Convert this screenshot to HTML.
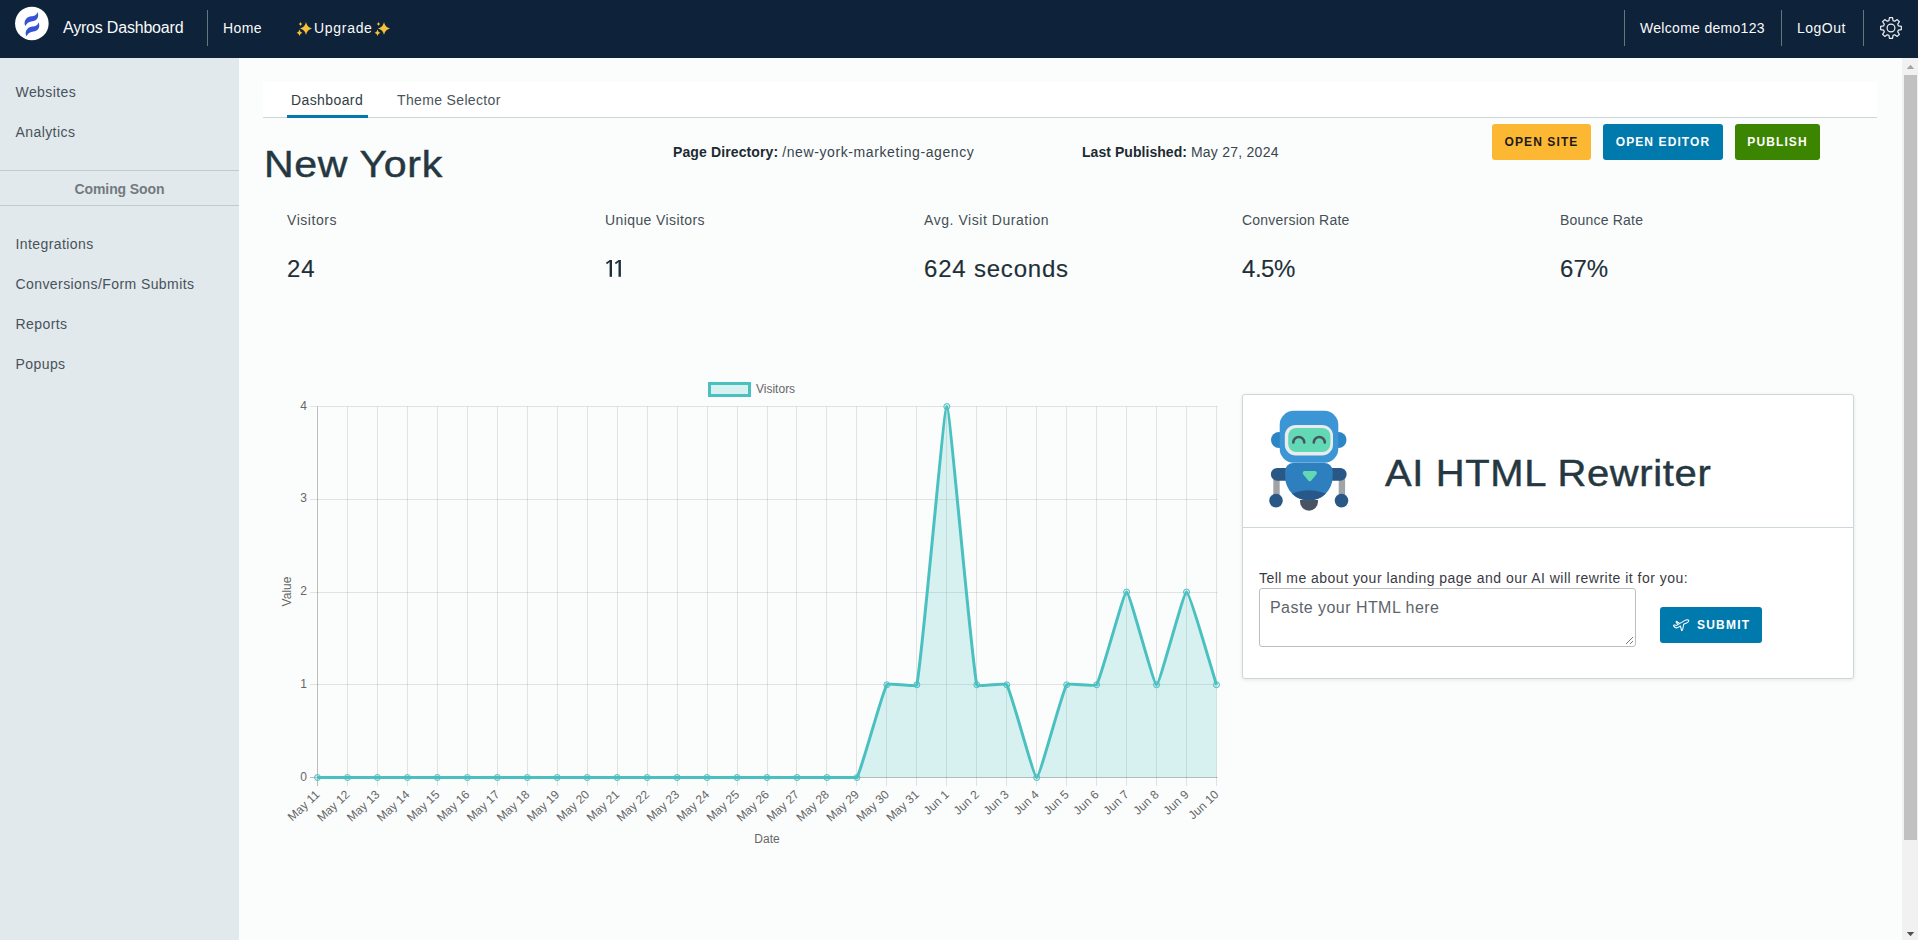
<!DOCTYPE html>
<html><head><meta charset="utf-8">
<style>
*{margin:0;padding:0;box-sizing:border-box}
html,body{width:1918px;height:940px;overflow:hidden;background:#fbfdfd;font-family:"Liberation Sans",sans-serif}
.abs{position:absolute;white-space:nowrap}
#hdr{position:absolute;left:0;top:0;width:1918px;height:58px;background:#0e2239}
.hdiv{position:absolute;top:10px;width:1px;height:36px;background:#66767a}
.htxt{position:absolute;color:#fafafa;white-space:nowrap}
#side{position:absolute;left:0;top:58px;width:239px;height:882px;background:#e1e9ec}
.nav{position:absolute;left:15.5px;font-size:14px;color:#48525a;letter-spacing:0.42px;white-space:nowrap}
#main{position:absolute;left:239px;top:58px;width:1664px;height:882px;background:#fbfdfd}
#sb{position:absolute;left:1902px;top:58px;width:16px;height:882px;background:#f1f1f1}
.t{position:absolute;white-space:nowrap}
.lbl{font-size:14px;color:#454f55;letter-spacing:0.55px}
.val{font-size:24px;color:#1f2f38;letter-spacing:0.8px;-webkit-text-stroke:0.15px #1f2f38}
.btn{position:absolute;top:124px;height:36px;border-radius:3px;font-size:12px;font-weight:bold;letter-spacing:1.1px;text-align:center;line-height:36px;color:#fff}
.ct{font-family:"Liberation Sans",sans-serif;font-size:12px;fill:#666}
</style></head><body>
<div id="hdr">
  <svg class="abs" style="left:14px;top:6px" width="36" height="36" viewBox="0 0 36 36">
    <circle cx="17.85" cy="17.45" r="16.8" fill="#fff"/>
    <path id="sw" d="M23.4 5.9 C25.3 9.8 23.8 13.8 19.6 14.9 C16.4 15.6 13.3 15.8 11.4 20.0 C9.2 16.2 11.6 11.2 17.0 10.3 C20.4 9.8 22.7 9.2 23.4 5.9Z" fill="#3553d4"/>
    <path d="M23.4 5.9 C25.3 9.8 23.8 13.8 19.6 14.9 C16.4 15.6 13.3 15.8 11.4 20.0 C9.2 16.2 11.6 11.2 17.0 10.3 C20.4 9.8 22.7 9.2 23.4 5.9Z" fill="#3553d4" transform="translate(1.1,10.3)"/>
  </svg>
  <div class="htxt" style="left:63px;top:18.5px;font-size:16px;letter-spacing:-0.2px">Ayros Dashboard</div>
  <div class="hdiv" style="left:207px"></div>
  <div class="htxt" style="left:223px;top:20px;font-size:14px;letter-spacing:0.4px">Home</div>
  <svg class="abs" style="left:296.1px;top:21.1px" width="17" height="16" viewBox="0 0 17 16">
    <path d="M10 1 Q10.8 6.2 16 7.5 Q10.8 8.8 10 14 Q9.2 8.8 4 7.5 Q9.2 6.2 10 1Z" fill="#f8c13a"/>
    <path d="M3.5 8.5 Q3.9 11 6.4 11.7 Q3.9 12.4 3.5 15 Q3.1 12.4 0.6 11.7 Q3.1 11 3.5 8.5Z" fill="#f8c13a"/>
    <path d="M4.5 1 Q4.8 2.6 6.3 3 Q4.8 3.4 4.5 5 Q4.2 3.4 2.7 3 Q4.2 2.6 4.5 1Z" fill="#f8c13a"/>
  </svg>
  <div class="htxt" style="left:314px;top:20px;font-size:14px;letter-spacing:0.7px">Upgrade</div>
  <svg class="abs" style="left:373.5px;top:21.1px" width="17" height="16" viewBox="0 0 17 16">
    <path d="M10 1 Q10.8 6.2 16 7.5 Q10.8 8.8 10 14 Q9.2 8.8 4 7.5 Q9.2 6.2 10 1Z" fill="#f8c13a"/>
    <path d="M3.5 8.5 Q3.9 11 6.4 11.7 Q3.9 12.4 3.5 15 Q3.1 12.4 0.6 11.7 Q3.1 11 3.5 8.5Z" fill="#f8c13a"/>
    <path d="M4.5 1 Q4.8 2.6 6.3 3 Q4.8 3.4 4.5 5 Q4.2 3.4 2.7 3 Q4.2 2.6 4.5 1Z" fill="#f8c13a"/>
  </svg>
  <div class="hdiv" style="left:1624px"></div>
  <div class="htxt" style="left:1640px;top:20px;font-size:14px;letter-spacing:0.3px">Welcome demo123</div>
  <div class="hdiv" style="left:1781px"></div>
  <div class="htxt" style="left:1797px;top:20px;font-size:14px;letter-spacing:0.5px">LogOut</div>
  <div class="hdiv" style="left:1863px"></div>
  <svg class="abs" style="left:1879px;top:16px" width="24" height="24" viewBox="0 0 24 24">
    <g fill="none" stroke="#eef0f2" stroke-width="1.2" stroke-linejoin="round">
      <circle cx="12" cy="12" r="3.9"/>
      <path d="M9.94 4.58 L10.46 1.66 L13.54 1.66 L14.06 4.58 L15.79 5.30 L18.22 3.60 L20.40 5.78 L18.70 8.21 L19.42 9.94 L22.34 10.46 L22.34 13.54 L19.42 14.06 L18.70 15.79 L20.40 18.22 L18.22 20.40 L15.79 18.70 L14.06 19.42 L13.54 22.34 L10.46 22.34 L9.94 19.42 L8.21 18.70 L5.78 20.40 L3.60 18.22 L5.30 15.79 L4.58 14.06 L1.66 13.54 L1.66 10.46 L4.58 9.94 L5.30 8.21 L3.60 5.78 L5.78 3.60 L8.21 5.30Z"/>
    </g>
  </svg>
</div>
<div id="side">
  <div class="nav" style="top:26px">Websites</div>
  <div class="nav" style="top:66px">Analytics</div>
  <div style="position:absolute;left:0;top:112px;width:239px;height:1px;background:#c3c9cc"></div>
  <div class="t" style="left:0;width:239px;top:123px;text-align:center;font-size:14px;font-weight:bold;color:#737a7e;letter-spacing:-0.1px">Coming Soon</div>
  <div style="position:absolute;left:0;top:147px;width:239px;height:1px;background:#c3c9cc"></div>
  <div class="nav" style="top:178px">Integrations</div>
  <div class="nav" style="top:218px">Conversions/Form Submits</div>
  <div class="nav" style="top:258px">Reports</div>
  <div class="nav" style="top:298px">Popups</div>
</div>
<div id="main"></div>
<!-- tabs -->
<div style="position:absolute;left:263px;top:82px;width:1614px;height:36px;background:#fff;border-bottom:1px solid #ccd5da"></div>
<div style="position:absolute;left:287px;top:115px;width:81px;height:3px;background:#0079ad"></div>
<div class="t" style="left:291px;top:92px;font-size:14px;color:#313d44;letter-spacing:0.4px">Dashboard</div>
<div class="t" style="left:397px;top:92px;font-size:14px;color:#49545a;letter-spacing:0.35px">Theme Selector</div>
<!-- title row -->
<div class="t" style="left:264px;top:144px;font-size:37px;color:#253841;letter-spacing:0.6px;transform:scaleX(1.11);transform-origin:0 0;-webkit-text-stroke:0.45px #253841">New York</div>
<div class="t" style="left:673px;top:144px;font-size:14px;color:#1e2a31"><b style="letter-spacing:0.12px">Page Directory:</b> <span style="letter-spacing:0.6px;color:#39444b">/new-york-marketing-agency</span></div>
<div class="t" style="left:1082px;top:144px;font-size:14px;color:#1e2a31"><b style="letter-spacing:0.05px">Last Published:</b> <span style="letter-spacing:0.25px;color:#39444b">May 27, 2024</span></div>
<div class="btn" style="left:1492px;width:99px;background:#fdb833;color:#1b1b1b">OPEN SITE</div>
<div class="btn" style="left:1603px;width:120px;background:#0079ad">OPEN EDITOR</div>
<div class="btn" style="left:1735px;width:85px;background:#3c8500">PUBLISH</div>
<!-- stats -->
<div class="t lbl" style="left:287px;top:212px">Visitors</div>
<div class="t val" style="left:287px;top:255px">24</div>
<div class="t lbl" style="left:605px;top:212px;letter-spacing:0.4px">Unique Visitors</div>
<svg class="abs" style="left:600px;top:255px" width="30" height="27" viewBox="600 255 30 27"><g fill="#1f2f38">
<rect x="609.6" y="260" width="2.4" height="16.8"/><path d="M609.8 259.9 L612 260.2 L607 264.2 L605.9 262.8Z"/>
<rect x="618.5" y="260" width="2.4" height="16.8"/><path d="M618.7 259.9 L620.9 260.2 L615.9 264.2 L614.8 262.8Z"/>
</g></svg>
<div class="t lbl" style="left:924px;top:212px">Avg. Visit Duration</div>
<div class="t val" style="left:924px;top:255px">624 seconds</div>
<div class="t lbl" style="left:1242px;top:212px;letter-spacing:0.22px">Conversion Rate</div>
<div class="t val" style="left:1242px;top:255px;letter-spacing:-0.47px">4.5%</div>
<div class="t lbl" style="left:1560px;top:212px;letter-spacing:0.2px">Bounce Rate</div>
<div class="t val" style="left:1560px;top:255px;letter-spacing:0.05px">67%</div>
<!-- chart -->
<svg style="position:absolute;left:0;top:0" width="1918" height="940" viewBox="0 0 1918 940">
<rect x="709.5" y="383.5" width="40" height="12" fill="rgba(75,192,192,0.2)" stroke="rgb(75,192,192)" stroke-width="3"/>
<text x="756" y="393" class="ct">Visitors</text>
<text transform="translate(290.5,591.5) rotate(-90)" text-anchor="middle" class="ct">Value</text>
<text x="767" y="843" text-anchor="middle" class="ct">Date</text>
<line x1="310" y1="777.5" x2="1217.5" y2="777.5" stroke="rgba(0,0,0,0.25)" stroke-width="1"/>
<line x1="310" y1="684.5" x2="1217.5" y2="684.5" stroke="rgba(0,0,0,0.1)" stroke-width="1"/>
<line x1="310" y1="592.5" x2="1217.5" y2="592.5" stroke="rgba(0,0,0,0.1)" stroke-width="1"/>
<line x1="310" y1="499.5" x2="1217.5" y2="499.5" stroke="rgba(0,0,0,0.1)" stroke-width="1"/>
<line x1="310" y1="406.5" x2="1217.5" y2="406.5" stroke="rgba(0,0,0,0.1)" stroke-width="1"/>
<line x1="317.5" y1="406.5" x2="317.5" y2="786" stroke="rgba(0,0,0,0.25)" stroke-width="1"/>
<line x1="347.5" y1="406.5" x2="347.5" y2="786" stroke="rgba(0,0,0,0.1)" stroke-width="1"/>
<line x1="377.5" y1="406.5" x2="377.5" y2="786" stroke="rgba(0,0,0,0.1)" stroke-width="1"/>
<line x1="407.5" y1="406.5" x2="407.5" y2="786" stroke="rgba(0,0,0,0.1)" stroke-width="1"/>
<line x1="437.5" y1="406.5" x2="437.5" y2="786" stroke="rgba(0,0,0,0.1)" stroke-width="1"/>
<line x1="467.5" y1="406.5" x2="467.5" y2="786" stroke="rgba(0,0,0,0.1)" stroke-width="1"/>
<line x1="497.5" y1="406.5" x2="497.5" y2="786" stroke="rgba(0,0,0,0.1)" stroke-width="1"/>
<line x1="527.5" y1="406.5" x2="527.5" y2="786" stroke="rgba(0,0,0,0.1)" stroke-width="1"/>
<line x1="557.5" y1="406.5" x2="557.5" y2="786" stroke="rgba(0,0,0,0.1)" stroke-width="1"/>
<line x1="587.5" y1="406.5" x2="587.5" y2="786" stroke="rgba(0,0,0,0.1)" stroke-width="1"/>
<line x1="617.5" y1="406.5" x2="617.5" y2="786" stroke="rgba(0,0,0,0.1)" stroke-width="1"/>
<line x1="647.5" y1="406.5" x2="647.5" y2="786" stroke="rgba(0,0,0,0.1)" stroke-width="1"/>
<line x1="677.5" y1="406.5" x2="677.5" y2="786" stroke="rgba(0,0,0,0.1)" stroke-width="1"/>
<line x1="707.5" y1="406.5" x2="707.5" y2="786" stroke="rgba(0,0,0,0.1)" stroke-width="1"/>
<line x1="737.5" y1="406.5" x2="737.5" y2="786" stroke="rgba(0,0,0,0.1)" stroke-width="1"/>
<line x1="767.5" y1="406.5" x2="767.5" y2="786" stroke="rgba(0,0,0,0.1)" stroke-width="1"/>
<line x1="796.5" y1="406.5" x2="796.5" y2="786" stroke="rgba(0,0,0,0.1)" stroke-width="1"/>
<line x1="826.5" y1="406.5" x2="826.5" y2="786" stroke="rgba(0,0,0,0.1)" stroke-width="1"/>
<line x1="856.5" y1="406.5" x2="856.5" y2="786" stroke="rgba(0,0,0,0.1)" stroke-width="1"/>
<line x1="886.5" y1="406.5" x2="886.5" y2="786" stroke="rgba(0,0,0,0.1)" stroke-width="1"/>
<line x1="916.5" y1="406.5" x2="916.5" y2="786" stroke="rgba(0,0,0,0.1)" stroke-width="1"/>
<line x1="946.5" y1="406.5" x2="946.5" y2="786" stroke="rgba(0,0,0,0.1)" stroke-width="1"/>
<line x1="976.5" y1="406.5" x2="976.5" y2="786" stroke="rgba(0,0,0,0.1)" stroke-width="1"/>
<line x1="1006.5" y1="406.5" x2="1006.5" y2="786" stroke="rgba(0,0,0,0.1)" stroke-width="1"/>
<line x1="1036.5" y1="406.5" x2="1036.5" y2="786" stroke="rgba(0,0,0,0.1)" stroke-width="1"/>
<line x1="1066.5" y1="406.5" x2="1066.5" y2="786" stroke="rgba(0,0,0,0.1)" stroke-width="1"/>
<line x1="1096.5" y1="406.5" x2="1096.5" y2="786" stroke="rgba(0,0,0,0.1)" stroke-width="1"/>
<line x1="1126.5" y1="406.5" x2="1126.5" y2="786" stroke="rgba(0,0,0,0.1)" stroke-width="1"/>
<line x1="1156.5" y1="406.5" x2="1156.5" y2="786" stroke="rgba(0,0,0,0.1)" stroke-width="1"/>
<line x1="1186.5" y1="406.5" x2="1186.5" y2="786" stroke="rgba(0,0,0,0.1)" stroke-width="1"/>
<line x1="1216.5" y1="406.5" x2="1216.5" y2="786" stroke="rgba(0,0,0,0.1)" stroke-width="1"/>
<path d="M317.50 777.50 C320.50 777.50 344.47 777.50 347.47 777.50 C350.46 777.50 374.44 777.50 377.43 777.50 C380.43 777.50 404.40 777.50 407.40 777.50 C410.40 777.50 434.37 777.50 437.37 777.50 C440.36 777.50 464.34 777.50 467.33 777.50 C470.33 777.50 494.30 777.50 497.30 777.50 C500.30 777.50 524.27 777.50 527.27 777.50 C530.26 777.50 554.24 777.50 557.23 777.50 C560.23 777.50 584.20 777.50 587.20 777.50 C590.20 777.50 614.17 777.50 617.17 777.50 C620.16 777.50 644.14 777.50 647.13 777.50 C650.13 777.50 674.10 777.50 677.10 777.50 C680.10 777.50 704.07 777.50 707.07 777.50 C710.06 777.50 734.04 777.50 737.03 777.50 C740.03 777.50 764.00 777.50 767.00 777.50 C770.00 777.50 793.97 777.50 796.97 777.50 C799.96 777.50 823.94 777.50 826.93 777.50 C829.93 777.50 855.49 777.50 856.90 777.50 C861.48 770.41 882.28 691.84 886.87 684.75 C888.28 682.57 916.25 687.44 916.83 684.75 C922.25 659.62 943.80 406.50 946.80 406.50 C949.80 406.50 971.35 659.62 976.77 684.75 C977.35 687.44 1005.32 682.57 1006.73 684.75 C1011.32 691.84 1033.70 777.50 1036.70 777.50 C1039.70 777.50 1062.08 691.84 1066.67 684.75 C1068.08 682.57 1095.22 686.93 1096.63 684.75 C1101.22 677.66 1123.60 592.00 1126.60 592.00 C1129.60 592.00 1153.57 684.75 1156.57 684.75 C1159.56 684.75 1183.54 592.00 1186.53 592.00 C1189.53 592.00 1213.50 675.48 1216.50 684.75 L1216.50 777.5 L317.50 777.5Z" fill="rgba(75,192,192,0.2)"/>
<path d="M317.50 777.50 C320.50 777.50 344.47 777.50 347.47 777.50 C350.46 777.50 374.44 777.50 377.43 777.50 C380.43 777.50 404.40 777.50 407.40 777.50 C410.40 777.50 434.37 777.50 437.37 777.50 C440.36 777.50 464.34 777.50 467.33 777.50 C470.33 777.50 494.30 777.50 497.30 777.50 C500.30 777.50 524.27 777.50 527.27 777.50 C530.26 777.50 554.24 777.50 557.23 777.50 C560.23 777.50 584.20 777.50 587.20 777.50 C590.20 777.50 614.17 777.50 617.17 777.50 C620.16 777.50 644.14 777.50 647.13 777.50 C650.13 777.50 674.10 777.50 677.10 777.50 C680.10 777.50 704.07 777.50 707.07 777.50 C710.06 777.50 734.04 777.50 737.03 777.50 C740.03 777.50 764.00 777.50 767.00 777.50 C770.00 777.50 793.97 777.50 796.97 777.50 C799.96 777.50 823.94 777.50 826.93 777.50 C829.93 777.50 855.49 777.50 856.90 777.50 C861.48 770.41 882.28 691.84 886.87 684.75 C888.28 682.57 916.25 687.44 916.83 684.75 C922.25 659.62 943.80 406.50 946.80 406.50 C949.80 406.50 971.35 659.62 976.77 684.75 C977.35 687.44 1005.32 682.57 1006.73 684.75 C1011.32 691.84 1033.70 777.50 1036.70 777.50 C1039.70 777.50 1062.08 691.84 1066.67 684.75 C1068.08 682.57 1095.22 686.93 1096.63 684.75 C1101.22 677.66 1123.60 592.00 1126.60 592.00 C1129.60 592.00 1153.57 684.75 1156.57 684.75 C1159.56 684.75 1183.54 592.00 1186.53 592.00 C1189.53 592.00 1213.50 675.48 1216.50 684.75" fill="none" stroke="rgb(75,192,192)" stroke-width="3" stroke-linejoin="miter" stroke-miterlimit="10"/>
<circle cx="317.50" cy="777.50" r="3" fill="rgba(75,192,192,0.2)" stroke="rgb(75,192,192)" stroke-width="1"/>
<circle cx="347.47" cy="777.50" r="3" fill="rgba(75,192,192,0.2)" stroke="rgb(75,192,192)" stroke-width="1"/>
<circle cx="377.43" cy="777.50" r="3" fill="rgba(75,192,192,0.2)" stroke="rgb(75,192,192)" stroke-width="1"/>
<circle cx="407.40" cy="777.50" r="3" fill="rgba(75,192,192,0.2)" stroke="rgb(75,192,192)" stroke-width="1"/>
<circle cx="437.37" cy="777.50" r="3" fill="rgba(75,192,192,0.2)" stroke="rgb(75,192,192)" stroke-width="1"/>
<circle cx="467.33" cy="777.50" r="3" fill="rgba(75,192,192,0.2)" stroke="rgb(75,192,192)" stroke-width="1"/>
<circle cx="497.30" cy="777.50" r="3" fill="rgba(75,192,192,0.2)" stroke="rgb(75,192,192)" stroke-width="1"/>
<circle cx="527.27" cy="777.50" r="3" fill="rgba(75,192,192,0.2)" stroke="rgb(75,192,192)" stroke-width="1"/>
<circle cx="557.23" cy="777.50" r="3" fill="rgba(75,192,192,0.2)" stroke="rgb(75,192,192)" stroke-width="1"/>
<circle cx="587.20" cy="777.50" r="3" fill="rgba(75,192,192,0.2)" stroke="rgb(75,192,192)" stroke-width="1"/>
<circle cx="617.17" cy="777.50" r="3" fill="rgba(75,192,192,0.2)" stroke="rgb(75,192,192)" stroke-width="1"/>
<circle cx="647.13" cy="777.50" r="3" fill="rgba(75,192,192,0.2)" stroke="rgb(75,192,192)" stroke-width="1"/>
<circle cx="677.10" cy="777.50" r="3" fill="rgba(75,192,192,0.2)" stroke="rgb(75,192,192)" stroke-width="1"/>
<circle cx="707.07" cy="777.50" r="3" fill="rgba(75,192,192,0.2)" stroke="rgb(75,192,192)" stroke-width="1"/>
<circle cx="737.03" cy="777.50" r="3" fill="rgba(75,192,192,0.2)" stroke="rgb(75,192,192)" stroke-width="1"/>
<circle cx="767.00" cy="777.50" r="3" fill="rgba(75,192,192,0.2)" stroke="rgb(75,192,192)" stroke-width="1"/>
<circle cx="796.97" cy="777.50" r="3" fill="rgba(75,192,192,0.2)" stroke="rgb(75,192,192)" stroke-width="1"/>
<circle cx="826.93" cy="777.50" r="3" fill="rgba(75,192,192,0.2)" stroke="rgb(75,192,192)" stroke-width="1"/>
<circle cx="856.90" cy="777.50" r="3" fill="rgba(75,192,192,0.2)" stroke="rgb(75,192,192)" stroke-width="1"/>
<circle cx="886.87" cy="684.75" r="3" fill="rgba(75,192,192,0.2)" stroke="rgb(75,192,192)" stroke-width="1"/>
<circle cx="916.83" cy="684.75" r="3" fill="rgba(75,192,192,0.2)" stroke="rgb(75,192,192)" stroke-width="1"/>
<circle cx="946.80" cy="406.50" r="3" fill="rgba(75,192,192,0.2)" stroke="rgb(75,192,192)" stroke-width="1"/>
<circle cx="976.77" cy="684.75" r="3" fill="rgba(75,192,192,0.2)" stroke="rgb(75,192,192)" stroke-width="1"/>
<circle cx="1006.73" cy="684.75" r="3" fill="rgba(75,192,192,0.2)" stroke="rgb(75,192,192)" stroke-width="1"/>
<circle cx="1036.70" cy="777.50" r="3" fill="rgba(75,192,192,0.2)" stroke="rgb(75,192,192)" stroke-width="1"/>
<circle cx="1066.67" cy="684.75" r="3" fill="rgba(75,192,192,0.2)" stroke="rgb(75,192,192)" stroke-width="1"/>
<circle cx="1096.63" cy="684.75" r="3" fill="rgba(75,192,192,0.2)" stroke="rgb(75,192,192)" stroke-width="1"/>
<circle cx="1126.60" cy="592.00" r="3" fill="rgba(75,192,192,0.2)" stroke="rgb(75,192,192)" stroke-width="1"/>
<circle cx="1156.57" cy="684.75" r="3" fill="rgba(75,192,192,0.2)" stroke="rgb(75,192,192)" stroke-width="1"/>
<circle cx="1186.53" cy="592.00" r="3" fill="rgba(75,192,192,0.2)" stroke="rgb(75,192,192)" stroke-width="1"/>
<circle cx="1216.50" cy="684.75" r="3" fill="rgba(75,192,192,0.2)" stroke="rgb(75,192,192)" stroke-width="1"/>
<text x="307" y="780.5" text-anchor="end" class="ct">0</text>
<text x="307" y="687.8" text-anchor="end" class="ct">1</text>
<text x="307" y="595.0" text-anchor="end" class="ct">2</text>
<text x="307" y="502.2" text-anchor="end" class="ct">3</text>
<text x="307" y="409.5" text-anchor="end" class="ct">4</text>
<text transform="translate(320.50,795.5) rotate(-42.9)" text-anchor="end" class="ct">May 11</text>
<text transform="translate(350.47,795.5) rotate(-42.9)" text-anchor="end" class="ct">May 12</text>
<text transform="translate(380.43,795.5) rotate(-42.9)" text-anchor="end" class="ct">May 13</text>
<text transform="translate(410.40,795.5) rotate(-42.9)" text-anchor="end" class="ct">May 14</text>
<text transform="translate(440.37,795.5) rotate(-42.9)" text-anchor="end" class="ct">May 15</text>
<text transform="translate(470.33,795.5) rotate(-42.9)" text-anchor="end" class="ct">May 16</text>
<text transform="translate(500.30,795.5) rotate(-42.9)" text-anchor="end" class="ct">May 17</text>
<text transform="translate(530.27,795.5) rotate(-42.9)" text-anchor="end" class="ct">May 18</text>
<text transform="translate(560.23,795.5) rotate(-42.9)" text-anchor="end" class="ct">May 19</text>
<text transform="translate(590.20,795.5) rotate(-42.9)" text-anchor="end" class="ct">May 20</text>
<text transform="translate(620.17,795.5) rotate(-42.9)" text-anchor="end" class="ct">May 21</text>
<text transform="translate(650.13,795.5) rotate(-42.9)" text-anchor="end" class="ct">May 22</text>
<text transform="translate(680.10,795.5) rotate(-42.9)" text-anchor="end" class="ct">May 23</text>
<text transform="translate(710.07,795.5) rotate(-42.9)" text-anchor="end" class="ct">May 24</text>
<text transform="translate(740.03,795.5) rotate(-42.9)" text-anchor="end" class="ct">May 25</text>
<text transform="translate(770.00,795.5) rotate(-42.9)" text-anchor="end" class="ct">May 26</text>
<text transform="translate(799.97,795.5) rotate(-42.9)" text-anchor="end" class="ct">May 27</text>
<text transform="translate(829.93,795.5) rotate(-42.9)" text-anchor="end" class="ct">May 28</text>
<text transform="translate(859.90,795.5) rotate(-42.9)" text-anchor="end" class="ct">May 29</text>
<text transform="translate(889.87,795.5) rotate(-42.9)" text-anchor="end" class="ct">May 30</text>
<text transform="translate(919.83,795.5) rotate(-42.9)" text-anchor="end" class="ct">May 31</text>
<text transform="translate(949.80,795.5) rotate(-42.9)" text-anchor="end" class="ct">Jun 1</text>
<text transform="translate(979.77,795.5) rotate(-42.9)" text-anchor="end" class="ct">Jun 2</text>
<text transform="translate(1009.73,795.5) rotate(-42.9)" text-anchor="end" class="ct">Jun 3</text>
<text transform="translate(1039.70,795.5) rotate(-42.9)" text-anchor="end" class="ct">Jun 4</text>
<text transform="translate(1069.67,795.5) rotate(-42.9)" text-anchor="end" class="ct">Jun 5</text>
<text transform="translate(1099.63,795.5) rotate(-42.9)" text-anchor="end" class="ct">Jun 6</text>
<text transform="translate(1129.60,795.5) rotate(-42.9)" text-anchor="end" class="ct">Jun 7</text>
<text transform="translate(1159.57,795.5) rotate(-42.9)" text-anchor="end" class="ct">Jun 8</text>
<text transform="translate(1189.53,795.5) rotate(-42.9)" text-anchor="end" class="ct">Jun 9</text>
<text transform="translate(1219.50,795.5) rotate(-42.9)" text-anchor="end" class="ct">Jun 10</text>

</svg>
<!-- AI card -->
<div style="position:absolute;left:1242px;top:394px;width:612px;height:285px;background:#fff;border:1px solid #cdd6db;border-radius:3px;box-shadow:0 1px 4px rgba(0,0,0,0.09)"></div>
<div style="position:absolute;left:1243px;top:527px;width:610px;height:1px;background:#cdd6db"></div>
<svg class="abs" style="left:1265px;top:405px" width="90" height="110" viewBox="0 0 90 110">
  <defs><clipPath id="bodyc"><path d="M20.2 66 a8 8 0 0 1 8 -8 h31.4 a8 8 0 0 1 8 8 v6 a23.7 23.6 0 0 1 -47.4 0 z"/></clipPath></defs>
  <circle cx="14" cy="35" r="8" fill="#2c85c5"/>
  <circle cx="73.5" cy="35" r="8" fill="#2c85c5"/>
  <rect x="14.7" y="5.8" width="58.6" height="52" rx="14" fill="#3c95d5"/>
  <rect x="19.8" y="19.9" width="48.2" height="30.6" rx="11" fill="#e8ecee"/>
  <rect x="23.2" y="23" width="42.2" height="24" rx="8" fill="#63d8b4"/>
  <path d="M28.3 37.5 a5.5 5.5 0 0 1 11 0" fill="none" stroke="#475360" stroke-width="2.6" stroke-linecap="round"/>
  <path d="M48.8 37.5 a5.5 5.5 0 0 1 11 0" fill="none" stroke="#475360" stroke-width="2.6" stroke-linecap="round"/>
  <rect x="8.3" y="70" width="6.4" height="26" fill="#a1a4a6"/>
  <rect x="73.7" y="70" width="6.4" height="26" fill="#a1a4a6"/>
  <rect x="5.9" y="63" width="75.7" height="12.7" rx="6.3" fill="#2a5886"/>
  <path d="M35 95 h18 v1.7 a9 9 0 0 1 -18 0z" fill="#4a5362"/>
  <path d="M20.2 66 a8 8 0 0 1 8 -8 h31.4 a8 8 0 0 1 8 8 v6 a23.7 23.6 0 0 1 -47.4 0 z" fill="#2d80bd"/>
  <ellipse cx="43.9" cy="110" rx="34" ry="24.7" fill="#285888" clip-path="url(#bodyc)"/>
  <path d="M38 66 h12 a2 2 0 0 1 1.5 3.2 l-5.2 6.2 a2 2 0 0 1 -3 0 l-5.2 -6.2 a2 2 0 0 1 1.5 -3.2z" fill="#63d8b4"/>
  <circle cx="11" cy="95.6" r="6.8" fill="#2a5886"/>
  <circle cx="76.5" cy="95.6" r="6.8" fill="#2a5886"/>
</svg>
<div class="t" style="left:1384.5px;top:452.5px;font-size:37px;color:#253841;letter-spacing:0.6px;transform:scaleX(1.08);transform-origin:0 0;-webkit-text-stroke:0.45px #253841">AI HTML Rewriter</div>
<div class="t" style="left:1259px;top:570px;font-size:14px;color:#3a3a45;letter-spacing:0.48px">Tell me about your landing page and our AI will rewrite it for you:</div>
<div style="position:absolute;left:1259px;top:588px;width:377px;height:59px;background:#fff;border:1px solid #bdbdbd;border-radius:3px"></div>
<div class="t" style="left:1270px;top:598.5px;font-size:16px;color:#5d656b;letter-spacing:0.45px">Paste your HTML here</div>
<svg class="abs" style="left:1624px;top:635px" width="10" height="10" viewBox="0 0 10 10"><path d="M9 2 L2 9 M9 6 L6 9" stroke="#777" stroke-width="1"/></svg>
<div style="position:absolute;left:1660px;top:607px;width:102px;height:36px;background:#0079ad;border-radius:3px"></div>
<svg class="abs" style="left:1668px;top:614px" width="26" height="22" viewBox="0 0 26 22">
  <g fill="none" stroke="#fff" stroke-width="1.05" stroke-linejoin="round" stroke-linecap="round">
    <path d="M5.6 11.9 Q5.2 11.0 6.6 11.1 L8.6 11.4 L16.2 6.9 Q19.6 5.0 20.8 6.4 Q21.2 7.6 18.6 9.0 L15.6 10.3 L14.9 14.5 Q14.6 16.6 13.6 16.6 L12.4 12.0 L9.6 13.6 Q7.4 14.6 5.6 11.9 Z"/>
    <path d="M11.3 9.2 L8.4 7.3 Q8.0 7.9 8.3 8.4 L9.6 10.1"/>
  </g>
</svg>
<div class="t" style="left:1697px;top:618px;font-size:12px;font-weight:bold;color:#fff;letter-spacing:1.2px">SUBMIT</div>
<!-- scrollbar -->
<div id="sb"></div>
<div style="position:absolute;left:1904px;top:75px;width:13px;height:765px;background:#c1c1c1"></div>
<svg class="abs" style="left:1902px;top:58px" width="16" height="16" viewBox="0 0 16 16"><path d="M4.8 11 L8.5 6.7 L12.2 11Z" fill="#a3a3a3"/></svg>
<svg class="abs" style="left:1902px;top:925px" width="16" height="16" viewBox="0 0 16 16"><path d="M4.8 7 L8.5 11.3 L12.2 7Z" fill="#505050"/></svg>
</body></html>
